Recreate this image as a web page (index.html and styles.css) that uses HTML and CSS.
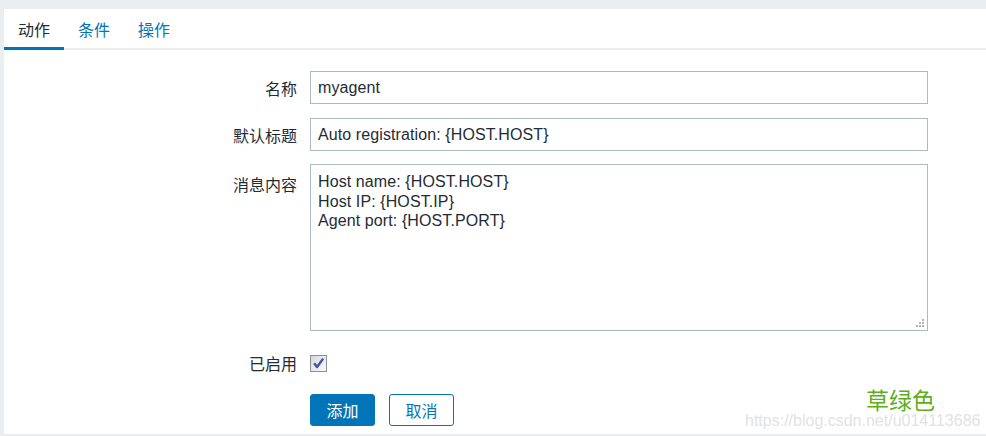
FILE: index.html
```html
<!DOCTYPE html>
<html lang="zh-CN">
<head>
<meta charset="utf-8">
<title>动作</title>
<link rel="stylesheet" href="styles.css">
</head>
<body>
<div class="panel">
  <div class="tabs">
    <a class="tab active">动作</a>
    <a class="tab">条件</a>
    <a class="tab">操作</a>
  </div>
  <form class="form">
    <div class="row">
      <label class="label">名称</label>
      <input class="field" type="text" value="myagent">
    </div>
    <div class="row row-2">
      <label class="label">默认标题</label>
      <input class="field" type="text" value="Auto registration: {HOST.HOST}">
    </div>
    <div class="row row-3 row-top">
      <label class="label label-top">消息内容</label>
      <div class="area-wrap">
        <textarea class="area">Host name: {HOST.HOST}
Host IP: {HOST.IP}
Agent port: {HOST.PORT}</textarea>
        <svg class="grip" width="10" height="10" viewBox="0 0 10 10">
          <rect x="7" y="1" width="2" height="2" fill="#b4b4b4"/>
          <rect x="4" y="4" width="2" height="2" fill="#b4b4b4"/>
          <rect x="7" y="4" width="2" height="2" fill="#b4b4b4"/>
          <rect x="1" y="7" width="2" height="2" fill="#b4b4b4"/>
          <rect x="4" y="7" width="2" height="2" fill="#b4b4b4"/>
          <rect x="7" y="7" width="2" height="2" fill="#b4b4b4"/>
        </svg>
      </div>
    </div>
    <div class="row row-4 row-check">
      <label class="label label-check">已启用</label>
      <span class="check">
        <svg width="15" height="15" viewBox="0 0 15 15">
          <path d="M3.2 7.2 L6 11 L12.2 2.6" fill="none" stroke="#3f55a0" stroke-width="2.4" stroke-linejoin="round"/>
        </svg>
      </span>
    </div>
    <div class="row row-5">
      <span class="label"></span>
      <div class="buttons">
        <button type="button" class="btn btn-primary">添加</button>
        <button type="button" class="btn btn-alt">取消</button>
      </div>
    </div>
  </form>
  <div class="mark">草绿色</div>
  <div class="url">https://blog.csdn.net/u014113686</div>
</div>
</body>
</html>
```
FILE: styles.css
```css
html, body {
  margin: 0;
  padding: 0;
}
body {
  background: #ebeef0;
  font-family: "Liberation Sans", "Noto Sans CJK SC", sans-serif;
  font-size: 16px;
  color: #1f2c33;
  width: 986px;
  height: 436px;
  overflow: hidden;
}
.panel {
  position: relative;
  margin: 9px 0 0 4px;
  height: 425px;
  background: #ffffff;
}
.tabs {
  display: flex;
  height: 39px;
  border-bottom: 2px solid #ebeef0;
}
.tab {
  width: 60px;
  height: 41px;
  box-sizing: border-box;
  padding: 0 14px;
  line-height: 44px;
  color: #0275b8;
  font-size: 16px;
  border-bottom: 3px solid transparent;
  overflow: visible;
}
.tab.active {
  color: #1f2c33;
  border-bottom-color: #0275b8;
}
.form {
  padding-top: 21px;
  display: flex;
  flex-direction: column;
}
.row {
  display: flex;
  align-items: center;
  gap: 13px;
}
.row-top {
  align-items: flex-start;
}
.row-2 { margin-top: 14px; }
.row-3 { margin-top: 13px; }
.row-4 { margin-top: 24px; }
.row-5 { margin-top: 22px; }
.label {
  width: 293px;
  text-align: right;
  font-size: 16px;
  flex: none;
}
.label-top {
  padding-top: 8px;
}
.label-check {
  line-height: 17px;
  height: 17px;
  padding-top: 1px;
}
.row-check {
  height: 17px;
}
.field {
  width: 618px;
  height: 33px;
  box-sizing: border-box;
  border: 1px solid #acbbc2;
  padding: 0 7px;
  font-family: "Liberation Sans", "Noto Sans CJK SC", sans-serif;
  font-size: 16px;
  letter-spacing: 0.1px;
  color: #1f2c33;
  background: #fff;
  outline: none;
  border-radius: 0;
  margin: 0;
}
.area-wrap {
  position: relative;
  width: 618px;
  height: 167px;
}
.area {
  display: block;
  width: 618px;
  height: 167px;
  box-sizing: border-box;
  border: 1px solid #acbbc2;
  padding: 7px 7px 6px;
  margin: 0;
  font-family: "Liberation Sans", "Noto Sans CJK SC", sans-serif;
  font-size: 16px;
  letter-spacing: 0.1px;
  line-height: 19.5px;
  color: #1f2c33;
  resize: none;
  outline: none;
  border-radius: 0;
}
.grip {
  position: absolute;
  right: 3px;
  bottom: 3px;
}
.check {
  width: 17px;
  height: 17px;
  box-sizing: border-box;
  border: 1px solid #8e8f8f;
  background: linear-gradient(135deg, #d5d7dc 0%, #eceef1 60%, #f7f7f9 100%);
  display: flex;
  align-items: center;
  justify-content: center;
}
.buttons {
  display: flex;
  gap: 14px;
}
.btn {
  width: 65px;
  height: 32px;
  box-sizing: border-box;
  border-radius: 3px;
  font-family: "Liberation Sans", "Noto Sans CJK SC", sans-serif;
  font-size: 16px;
  padding: 0;
  margin: 0;
  cursor: pointer;
}
.btn-primary {
  background: #0275b8;
  border: 1px solid #0275b8;
  color: #ffffff;
}
.btn-alt {
  background: #ffffff;
  border: 1px solid #0275b8;
  color: #0275b8;
}
.mark {
  position: absolute;
  left: 862px;
  top: 379px;
  font-size: 23px;
  line-height: 22px;
  color: #5fae1a;
  font-family: "Noto Sans CJK SC", sans-serif;
}
.url {
  position: absolute;
  left: 741px;
  top: 404px;
  font-size: 16px;
  line-height: 16px;
  color: #e2e2e2;
  font-family: "Liberation Sans", sans-serif;
}
```
